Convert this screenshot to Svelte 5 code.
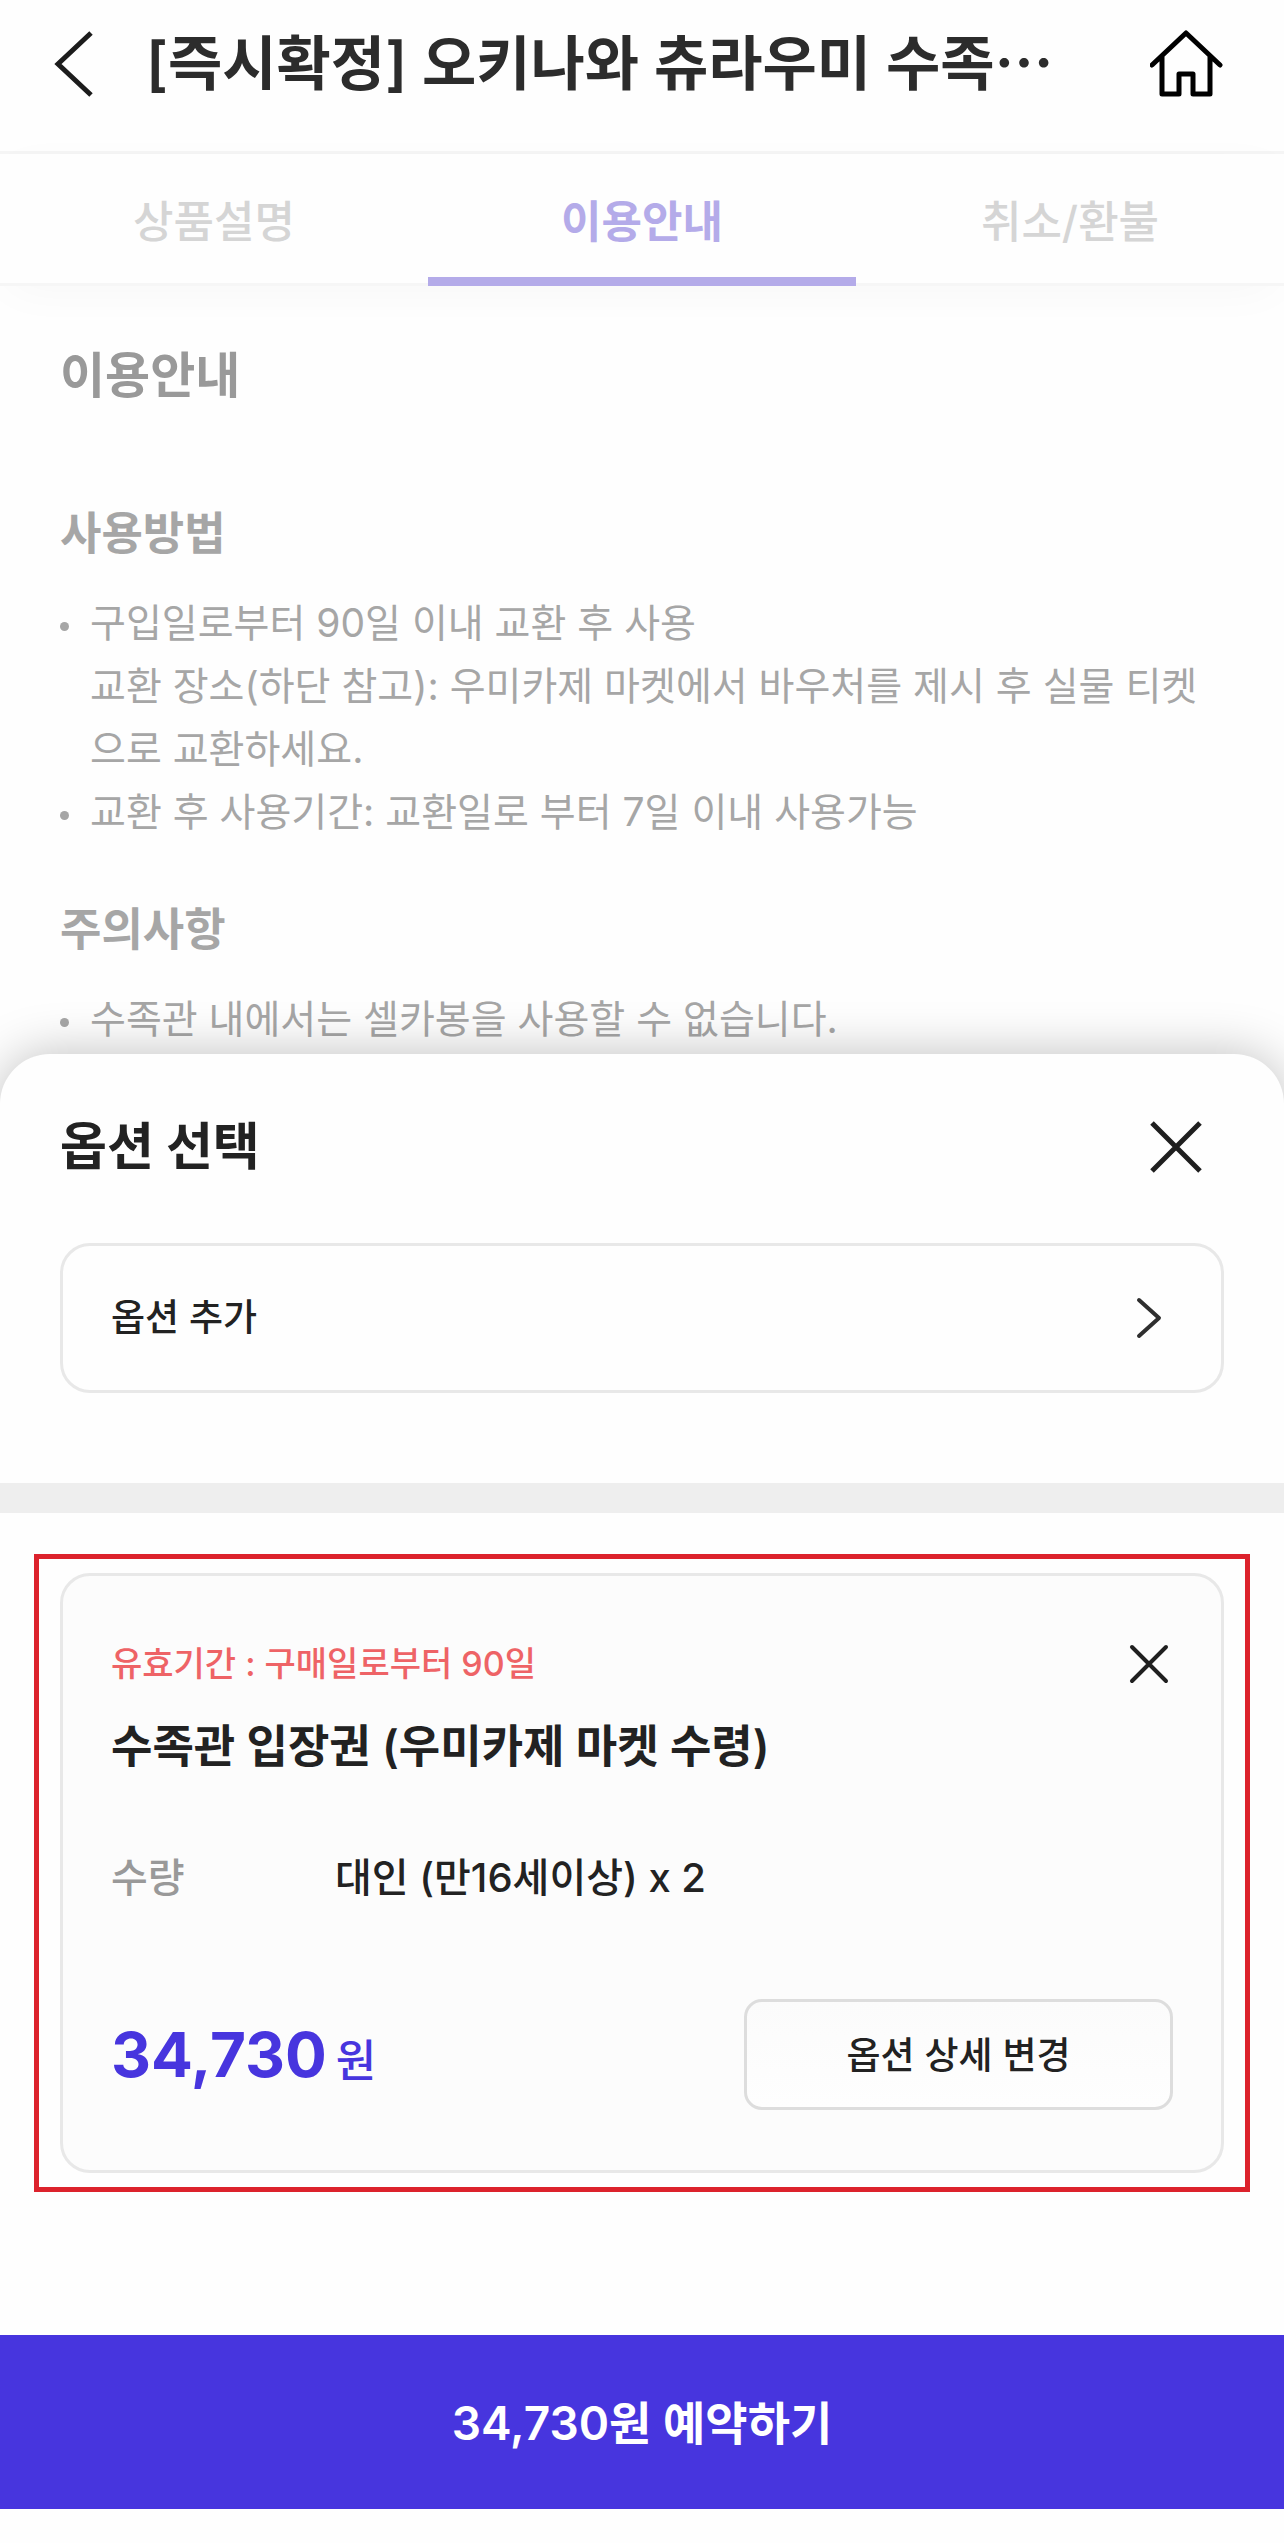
<script lang="ts">
	type Tab = { id: string; label: string };
	type Guide = { title: string; items: string[][] };

	const tabs: Tab[] = [
		{ id: 'detail', label: '상품설명' },
		{ id: 'guide', label: '이용안내' },
		{ id: 'refund', label: '취소/환불' }
	];

	const guides: Guide[] = [
		{
			title: '사용방법',
			items: [
				[
					'구입일로부터 90일 이내 교환 후 사용',
					'교환 장소(하단 참고): 우미카제 마켓에서 바우처를 제시 후 실물 티켓으로 교환하세요.'
				],
				['교환 후 사용기간: 교환일로 부터 7일 이내 사용가능']
			]
		},
		{
			title: '주의사항',
			items: [['수족관 내에서는 셀카봉을 사용할 수 없습니다.']]
		}
	];

	let activeTab = $state('guide');

	const price = 34730;
	const priceLabel = price.toLocaleString('en-US');
</script>

<div class="page">
	<header class="header">
		<button class="icon-btn" type="button" aria-label="뒤로">
			<svg width="40" height="68" viewBox="0 0 40 68" fill="none">
				<path d="M37 3 4 34l33 31" stroke="#1c1c1c" stroke-width="5" />
			</svg>
		</button>
		<h1 class="header__title">[즉시확정] 오키나와 츄라우미 수족⋯</h1>
		<a class="icon-btn" href="#home" aria-label="홈">
			<svg width="74" height="68" viewBox="0 0 74 68" fill="none">
				<path
					d="M2 35 36 3l34 32M12 27v37h17V44h14v20h17V27"
					stroke="#000"
					stroke-width="5"
					stroke-linecap="round"
					stroke-linejoin="round"
				/>
			</svg>
		</a>
	</header>

	<div class="tabs" role="tablist">
		{#each tabs as tab (tab.id)}
			<button
				class="tabs__item"
				class:tabs__item--active={activeTab === tab.id}
				type="button"
				role="tab"
				aria-selected={activeTab === tab.id}
				onclick={() => (activeTab = tab.id)}
			>
				{tab.label}
			</button>
		{/each}
	</div>

	<main class="guide">
		<h2 class="guide__title">이용안내</h2>
		{#each guides as guide (guide.title)}
			<section class="guide__section">
				<h3 class="guide__subtitle">{guide.title}</h3>
				<ul class="guide__list">
					{#each guide.items as lines}
						<li class="guide__item">
							<div>
								{#each lines as line}
									<p>{line}</p>
								{/each}
							</div>
						</li>
					{/each}
				</ul>
			</section>
		{/each}
	</main>

	<section class="sheet" aria-labelledby="sheet-title">
		<div class="sheet__head">
			<h2 class="sheet__title" id="sheet-title">옵션 선택</h2>
			<button class="icon-btn" type="button" aria-label="닫기">
				<svg width="60" height="60" viewBox="0 0 60 60" fill="none">
					<path d="m6 6 48 48M54 6 6 54" stroke="#1f1f1f" stroke-width="5" />
				</svg>
			</button>
		</div>

		<div class="sheet__add">
			<button class="add-option" type="button">
				<span>옵션 추가</span>
				<svg width="48" height="48" viewBox="0 0 48 48" fill="none">
					<path
						d="m14 6 20 18-20 18"
						stroke="#2f2f2f"
						stroke-width="4"
						stroke-linecap="round"
						stroke-linejoin="round"
					/>
				</svg>
			</button>
		</div>

		<div class="highlight">
			<article class="card">
				<div class="card__head">
					<div>
						<p class="card__period">유효기간 : 구매일로부터 90일</p>
						<h3 class="card__title">수족관 입장권 (우미카제 마켓 수령)</h3>
					</div>
					<button class="icon-btn" type="button" aria-label="옵션 삭제">
						<svg width="48" height="48" viewBox="0 0 48 48" fill="none">
							<path
								d="m7 7 34 34M41 7 7 41"
								stroke="#1f1f1f"
								stroke-width="4"
								stroke-linecap="round"
							/>
						</svg>
					</button>
				</div>
				<dl class="card__qty">
					<dt>수량</dt>
					<dd>대인 (만16세이상) x 2</dd>
				</dl>
				<div class="card__foot">
					<p class="card__price"><strong>{priceLabel}</strong><span>원</span></p>
					<button class="card__change" type="button">옵션 상세 변경</button>
				</div>
			</article>
		</div>

		<button class="reserve" type="button">{priceLabel}원 예약하기</button>
	</section>
</div>

<style>
	:global(body) {
		background: #fefefe;
	}
	.page {
		--primary: #4735de;
		--primary-dim: #b4abe9;
		--text: #222;
		--line: #e8e8e8;
		--gutter: 60px;

		display: flex;
		flex-direction: column;
		min-height: 100vh;
		font-family: Inter, 'Noto Sans CJK KR', sans-serif;
		font-weight: 500;
		color: var(--text);
		background: #fefefe;
	}
	h1,
	h2,
	h3,
	p,
	ul,
	dl,
	dd {
		margin: 0;
		padding: 0;
	}
	button {
		font: inherit;
		color: inherit;
		background: none;
		border: 0;
		padding: 0;
		cursor: pointer;
	}
	svg {
		display: block;
	}
	.icon-btn {
		flex: none;
	}

	.header {
		display: flex;
		align-items: center;
		gap: 52px;
		padding: 24px var(--gutter) 47px 54px;
		border-bottom: 3px solid #f5f5f5;
	}
	.header__title {
		flex: 1;
		font-size: 59px;
		font-weight: 600;
		line-height: 80px;
		white-space: nowrap;
		overflow: hidden;
		color: #2c2c2c;
	}

	.tabs {
		display: grid;
		grid-template-columns: repeat(3, 1fr);
		box-shadow:
			inset 0 -3px 0 #f6f6f6,
			0 10px 50px -10px rgba(0, 0, 0, 0.04);
	}
	.tabs__item {
		height: 132px;
		padding-top: 6px;
		border-bottom: 9px solid transparent;
		font-size: 44px;
		color: #d5d5d5;
	}
	.tabs__item--active {
		border-bottom-color: var(--primary-dim);
		font-weight: 600;
		color: var(--primary-dim);
	}

	.guide {
		padding: 60px var(--gutter) 4px;
		color: #a6a6a6;
	}
	.guide__title {
		margin-bottom: 100px;
		font-size: 49px;
		font-weight: 600;
		line-height: 60px;
		color: #999;
	}
	.guide__section + .guide__section {
		margin-top: 59px;
	}
	.guide__subtitle {
		margin-bottom: 29px;
		font-size: 45px;
		font-weight: 600;
		line-height: 56px;
	}
	.guide__list {
		list-style: none;
	}
	.guide__item {
		display: flex;
		gap: 21px;
		font-size: 39px;
		font-weight: 400;
		line-height: 63px;
	}
	.guide__item::before {
		content: '';
		flex: none;
		width: 9px;
		height: 9px;
		margin-top: 31px;
		border-radius: 50%;
		background: currentColor;
	}

	.sheet {
		position: relative;
		flex: 1;
		background: #fefefe;
		border-radius: 50px 50px 0 0;
		box-shadow: 0 0 50px rgba(0, 0, 0, 0.25);
	}
	.sheet__head {
		display: flex;
		align-items: center;
		justify-content: space-between;
		padding: 63px 78px 66px var(--gutter);
	}
	.sheet__title {
		font-size: 51px;
		font-weight: 700;
		line-height: 60px;
	}
	.sheet__add {
		padding: 0 var(--gutter) 90px;
		border-bottom: 30px solid #eee;
	}
	.add-option {
		display: flex;
		align-items: center;
		justify-content: space-between;
		width: 100%;
		padding: 48px;
		border: 3px solid var(--line);
		border-radius: 30px;
		font-size: 37px;
		line-height: 44px;
	}

	.highlight {
		margin: 41px 34px 143px;
		padding: 14px 21px;
		border: 5px solid #dc222c;
	}
	.card {
		padding: 64px 48px 60px;
		border: 3px solid var(--line);
		border-radius: 30px;
		background: #fcfcfc;
	}
	.card__head {
		display: flex;
		align-items: flex-start;
		justify-content: space-between;
	}
	.card__period {
		margin-bottom: 29px;
		font-size: 34px;
		line-height: 48px;
		color: #ee6366;
	}
	.card__title {
		font-size: 45px;
		font-weight: 600;
		line-height: 60px;
	}
	.card__qty {
		display: grid;
		grid-template-columns: 224px 1fr;
		margin: 71px 0 91px;
		font-size: 40px;
		line-height: 60px;
	}
	.card__qty dt {
		color: #999;
	}
	.card__foot {
		display: flex;
		align-items: center;
		justify-content: space-between;
	}
	.card__price {
		display: flex;
		align-items: baseline;
		gap: 9px;
		color: var(--primary);
	}
	.card__price strong {
		font-size: 62px;
		font-weight: 700;
		line-height: 72px;
	}
	.card__price span {
		font-size: 44px;
	}
	.card__change {
		width: 429px;
		height: 111px;
		padding-bottom: 4px;
		border: 3px solid #ddd;
		border-radius: 18px;
		background: linear-gradient(#fbfbfb, #fefefe);
		font-size: 37px;
	}

	.reserve {
		display: block;
		width: 100%;
		height: 174px;
		padding-bottom: 4px;
		background: var(--primary);
		font-size: 46px;
		font-weight: 600;
		color: #fff;
	}
</style>
